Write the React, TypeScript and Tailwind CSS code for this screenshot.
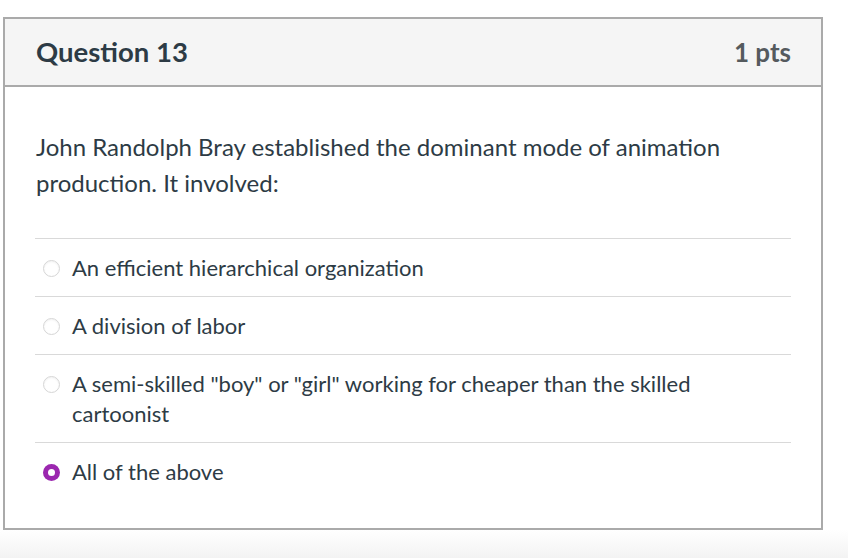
const OPTIONS = [
  { id: "a", text: "An efficient hierarchical organization" },
  { id: "b", text: "A division of labor" },
  { id: "c", text: 'A semi-skilled "boy" or "girl" working for cheaper than the skilled cartoonist' },
  { id: "d", text: "All of the above" },
];

function Radio({ checked }: { checked: boolean }) {
  if (checked) {
    return (
      <span className="mt-[7px] shrink-0 w-[17px] h-[17px] rounded-full bg-[#9b27af] flex items-center justify-center">
        <span className="w-[7px] h-[7px] rounded-full bg-white" />
      </span>
    );
  }
  return <span className="mt-[7px] shrink-0 w-[17px] h-[17px] rounded-full border border-[#d6d6d6] bg-white shadow-[inset_0_1px_2px_rgba(0,0,0,0.06)]" />;
}

export default function App() {
  const selected = "d";
  return (
    <div className="w-[848px] h-[558px] bg-white flex flex-col text-[#2d3b45]" style={{ fontFamily: "Lato, 'Open Sans', sans-serif" }}>
      <div className="pt-[17px] pl-[3px]">
        <div className="w-[820px] h-[513px] border-2 border-[#aaaaaa] flex flex-col">
          {/* header */}
          <div className="h-[68px] bg-[#f5f5f5] border-b-2 border-[#aaaaaa] flex items-center justify-between pl-[31px] pr-[30px]">
            <h2 className="text-[27.5px] font-bold">Question 13</h2>
            <span className="text-[26px] font-bold text-[#555a5e]">1 pts</span>
          </div>

          {/* body */}
          <div className="px-[30px] pt-[42px]">
            <p className="text-[24px] leading-[36px] pl-[1px] pr-[40px]">
              John Randolph Bray established the dominant mode of animation production. It involved:
            </p>
            <div className="mt-[37px] border-t border-[#d9d9d9]">
              {OPTIONS.map((o, i) => (
                <div
                  key={o.id}
                  className={`flex items-start gap-[12px] pl-[8px] py-[13.5px] ${i < OPTIONS.length - 1 ? "border-b border-[#d9d9d9]" : ""}`}
                >
                  <Radio checked={o.id === selected} />
                  <span className="text-[22px] leading-[30px] pr-[60px]">{o.text}</span>
                </div>
              ))}
            </div>
          </div>
        </div>
      </div>
      <div className="flex-1 bg-gradient-to-b from-white to-[#f3f3f3]" />
    </div>
  );
}
